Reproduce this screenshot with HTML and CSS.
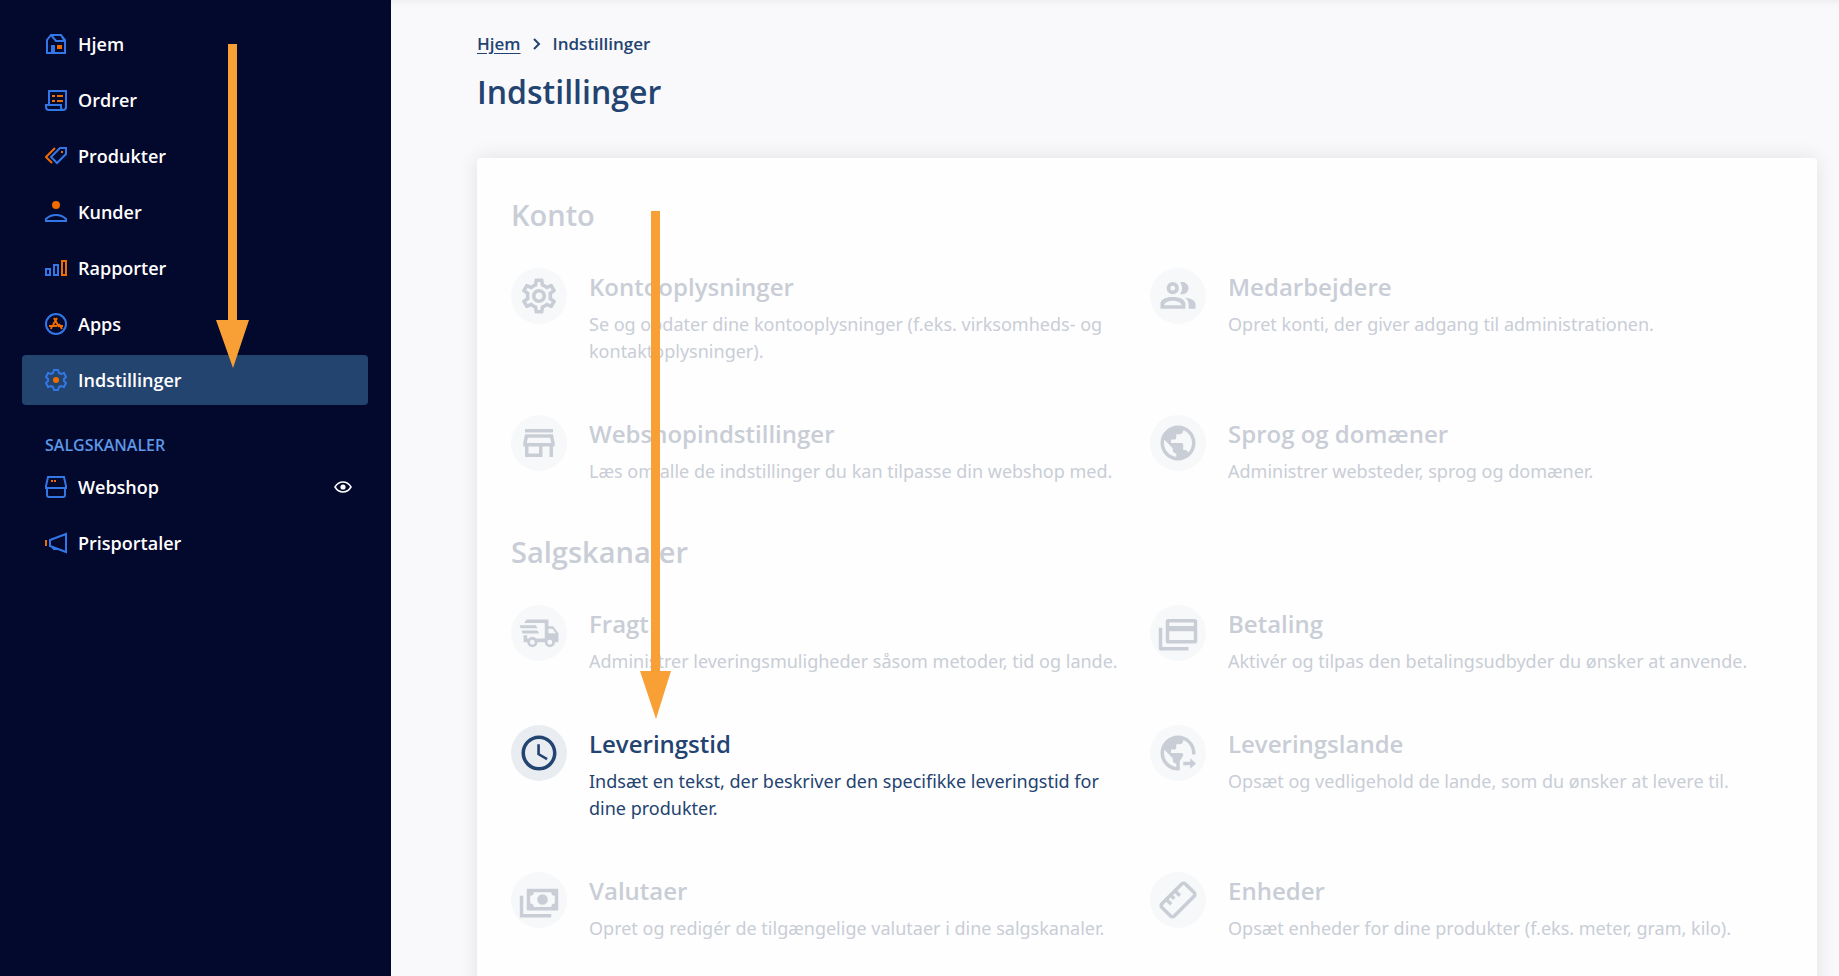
FILE: index.html
```
<!DOCTYPE html>
<html lang="da">

<head>
    <meta charset="UTF-8">
    <meta name="viewport" content="width=device-width, initial-scale=1.0">
    <title>Indstillinger</title>
    <link rel="stylesheet" href="styles.css">
</head>

<body>
    <!-- Sidebar -->
    <aside class="sidebar">
        <nav class="nav">
            <a href="#" class="nav-link">
                <svg class="nav-icon" viewBox="0 0 22 22"><path class="blue" d="M2 20V7L6 2H16L20 7V20ZM6 2L11 8H20M16 2L19 7"/><path class="blue-fill" d="M6 12h4v8H6z"/><path class="orange-fill" d="M12 12h5v4h-5z"/></svg>
                Hjem
            </a>
            <a href="#" class="nav-link">
                <svg class="nav-icon" viewBox="0 0 22 22"><path class="blue" d="M4 15V2H21V18Q21 21 18 21H4Q1 21 1 18V16H16V18Q16 21 18 21"/><path class="orange" d="M7 7h3M12 7h6M7 12h3M12 12h6"/></svg>
                Ordrer
            </a>
            <a href="#" class="nav-link">
                <svg class="nav-icon" viewBox="0 0 22 22"><path class="orange" d="M10 3L1 12L7 18"/><path class="blue" d="M15 3H21V9L12 18L6 12Z"/><path class="orange-fill" d="M16 6h2v2h-2z"/></svg>
                Produkter
            </a>
            <a href="#" class="nav-link">
                <svg class="nav-icon" viewBox="0 0 22 22"><circle class="orange-fill" cx="11" cy="4" r="4"/><path class="blue" d="M1 20V18Q5 14 11 14T21 18V20Z"/></svg>
                Kunder
            </a>
            <a href="#" class="nav-link">
                <svg class="nav-icon" viewBox="0 0 22 22"><path class="blue" d="M1 12h4v6H1zM9 8h4v10H9z"/><path class="orange" d="M17 4h4v14h-4z"/></svg>
                Rapporter
            </a>
            <a href="#" class="nav-link">
                <svg class="nav-icon" viewBox="0 0 22 22"><circle class="blue" cx="11" cy="11" r="10"/><path class="orange" d="M9 5L14 14M12 5L8 12M4 13H12M7 13L6 16M14 11L17 16M13 13H18"/></svg>
                Apps
            </a>
            <a href="#" class="nav-link active">
                <svg class="nav-icon" viewBox="0 0 22 22"><path class="blue" d="M9 1H13L14 4L16 5L19 4L21 8L19 10V12L21 14L19 18L16 17L14 18L13 21H9L8 18L6 17L3 18L1 14L3 12V10L1 8L3 4L6 5L8 4Z"/><circle class="orange-fill" cx="11" cy="11" r="3"/></svg>
                Indstillinger
            </a>
        </nav>

        <h2 class="nav-heading">Salgskanaler</h2>
        <nav class="nav">
            <a href="#" class="nav-link">
                <svg class="nav-icon" viewBox="0 0 22 22"><path class="blue" d="M3 1H19L21 10V12H1V10ZM2 12V19Q2 21 4 21H18Q20 21 20 19V12"/><path class="orange" d="M6 5h2M9 5h2"/></svg>
                Webshop
                <svg class="eye" viewBox="0 0 18 12"><path d="M1 6Q4 1 9 1T17 6Q14 11 9 11T1 6Z" fill="none" stroke="currentColor" stroke-width="1.5"/><circle cx="9" cy="6" r="2.6" fill="currentColor"/></svg>
            </a>
            <a href="#" class="nav-link">
                <svg class="nav-icon" viewBox="0 0 22 22"><path class="orange" d="M1 8v6"/><path class="blue" d="M5 8L21 2V20L5 14ZM7 15L9 17L12 17"/></svg>
                Prisportaler
            </a>
        </nav>
    </aside>

    <!-- Page content -->
    <main class="content">
        <nav class="breadcrumb">
            <a href="#">Hjem</a>
            <svg class="chevron" viewBox="0 0 8 12"><path d="M1 1L6 6L1 11" fill="none" stroke="currentColor" stroke-width="2"/></svg>
            <span>Indstillinger</span>
        </nav>
        <h1>Indstillinger</h1>

        <div class="card">
            <h2 class="group-title">Konto</h2>
            <div class="settings">
                <a href="#" class="setting">
                    <span class="circle"><svg viewBox="0 0 24 24"><path d="M19.43 12.98c.04-.32.07-.64.07-.98s-.03-.66-.07-.98l2.11-1.65c.19-.15.24-.42.12-.64l-2-3.46c-.09-.16-.26-.25-.44-.25-.06 0-.12.01-.17.03l-2.49 1c-.52-.4-1.08-.73-1.69-.98l-.38-2.65C14.46 2.18 14.25 2 14 2h-4c-.25 0-.46.18-.49.42l-.38 2.65c-.61.25-1.17.59-1.69.98l-2.49-1c-.06-.02-.12-.03-.18-.03-.17 0-.34.09-.43.25l-2 3.46c-.13.22-.07.49.12.64l2.11 1.65c-.04.32-.07.65-.07.98s.03.66.07.98l-2.11 1.65c-.19.15-.24.42-.12.64l2 3.46c.09.16.26.25.44.25.06 0 .12-.01.17-.03l2.49-1c.52.4 1.08.73 1.69.98l.38 2.65c.03.24.24.42.49.42h4c.25 0 .46-.18.49-.42l.38-2.65c.61-.25 1.17-.59 1.69-.98l2.49 1c.06.02.12.03.18.03.17 0 .34-.09.43-.25l2-3.46c.12-.22.07-.49-.12-.64l-2.11-1.65zm-1.98-1.71c.04.31.05.52.05.73s-.02.43-.05.73l-.14 1.13.89.7 1.08.84-.7 1.21-1.27-.51-1.04-.42-.9.68c-.43.32-.84.56-1.25.73l-1.06.43-.16 1.13-.2 1.35h-1.4l-.19-1.35-.16-1.13-1.06-.43c-.43-.18-.83-.41-1.23-.71l-.91-.7-1.06.43-1.27.51-.7-1.21 1.08-.84.89-.7-.14-1.13c-.03-.31-.05-.54-.05-.74s.02-.43.05-.73l.14-1.13-.89-.7-1.08-.84.7-1.21 1.27.51 1.04.42.9-.68c.43-.32.84-.56 1.25-.73l1.06-.43.16-1.13.2-1.35h1.39l.19 1.35.16 1.13 1.06.43c.43.18.83.41 1.23.71l.91.7 1.06-.43 1.27-.51.7 1.21-1.07.85-.89.7.14 1.13zM12 8c-2.21 0-4 1.79-4 4s1.79 4 4 4 4-1.79 4-4-1.79-4-4-4zm0 6c-1.1 0-2-.9-2-2s.9-2 2-2 2 .9 2 2-.9 2-2 2z"/></svg></span>
                    <span class="text">
                        <strong>Kontooplysninger</strong>
                        <span>Se og opdater dine kontooplysninger (f.eks. virksomheds- og kontaktoplysninger).</span>
                    </span>
                </a>
                <a href="#" class="setting">
                    <span class="circle"><svg viewBox="0 0 24 24"><path fill-rule="evenodd" d="M9 11a3.500 3.500 0 1 0 0-7 3.500 3.500 0 0 0 0 7zm0-2.100a1.400 1.400 0 1 1 0-2.800 1.400 1.400 0 0 1 0 2.800zM9 12.600c-4 0-7 1.500-7 4v2.700h14.200v-2.700c0-2.500-3-4-7.200-4zm-5 4.700c.5-1.700 2.500-2.600 5-2.600s4.700.9 5.200 2.600zM13.200 4.300a5.500 5.500 0 0 1 0 6.500A3.500 3.500 0 1 0 13.200 4.300zM16 13c1.300.9 2.100 2.100 2.100 3.800v2.500H22v-2.700c0-2-2.500-3.300-6-3.600z"/></svg></span>
                    <span class="text">
                        <strong>Medarbejdere</strong>
                        <span>Opret konti, der giver adgang til administrationen.</span>
                    </span>
                </a>
                <a href="#" class="setting">
                    <span class="circle"><svg viewBox="0 0 24 24"><path d="M18.360 9l.6 3H5.040l.6-3h12.720M20 4H4v2h16V4zm0 3H4l-1 5v2h1v6h10v-6h4v6h2v-6h1v-2l-1-5zM6 18v-4h6v4H6z"/></svg></span>
                    <span class="text">
                        <strong>Webshopindstillinger</strong>
                        <span>Læs om alle de indstillinger du kan tilpasse din webshop med.</span>
                    </span>
                </a>
                <a href="#" class="setting">
                    <span class="circle"><svg viewBox="0 0 24 24"><path d="M12 2C6.480 2 2 6.480 2 12s4.480 10 10 10 10-4.480 10-10S17.520 2 12 2zm-1 17.930c-3.950-.49-7-3.850-7-7.930 0-.62.080-1.210.210-1.790L9 15v1c0 1.100.9 2 2 2v1.930zm6.900-2.540c-.26-.81-1-1.390-1.900-1.390h-1v-3c0-.55-.45-1-1-1H8v-2h2c.55 0 1-.45 1-1V7h2c1.100 0 2-.9 2-2v-.41c2.930 1.190 5 4.060 5 7.410 0 2.080-.8 3.970-2.100 5.390z"/></svg></span>
                    <span class="text">
                        <strong>Sprog og domæner</strong>
                        <span>Administrer websteder, sprog og domæner.</span>
                    </span>
                </a>
            </div>

            <h2 class="group-title">Salgskanaler</h2>
            <div class="settings">
                <a href="#" class="setting">
                    <span class="circle"><svg viewBox="0 0 24 24"><path fill-rule="evenodd" d="M5 4.300h12.400v3.800h2.700l3 4v5.200h-2a2.900 2.900 0 0 1-5.800 0h-4.200a2.900 2.900 0 0 1-5.800 0H3.200v-4h2v1.900h.9a2.900 2.900 0 0 1 4.400 0h4.800V6.300H3.500zM17.400 9.500v2.700h4.300l-2.100-2.700zM8.200 15.900a1.400 1.400 0 1 0 0 2.800 1.400 1.400 0 0 0 0-2.800zM18.200 15.900a1.400 1.400 0 1 0 0 2.800 1.400 1.400 0 0 0 0-2.800zM.9 7.500h9.300l.9 1.800H1.500zM2 10.500h9.200l.9 1.800H2.600z"/></svg></span>
                    <span class="text">
                        <strong>Fragt</strong>
                        <span>Administrer leveringsmuligheder såsom metoder, tid og lande.</span>
                    </span>
                </a>
                <a href="#" class="setting">
                    <span class="circle"><svg viewBox="0 0 24 24"><path fill-rule="evenodd" d="M6.500 4h15a1.500 1.500 0 0 1 1.500 1.500v11a1.500 1.500 0 0 1-1.500 1.500h-15a1.500 1.500 0 0 1-1.500-1.500v-11A1.500 1.500 0 0 1 6.500 4zM7 6v2h14V6zm0 5v5h14v-5zM1 9h2v11h15v2H2.500A1.500 1.500 0 0 1 1 20.500z"/></svg></span>
                    <span class="text">
                        <strong>Betaling</strong>
                        <span>Aktivér og tilpas den betalingsudbyder du ønsker at anvende.</span>
                    </span>
                </a>
                <a href="#" class="setting current">
                    <span class="circle"><svg viewBox="0 0 24 24"><path d="M11.990 2C6.470 2 2 6.480 2 12s4.470 10 9.990 10C17.520 22 22 17.520 22 12S17.520 2 11.990 2zM12 20c-4.420 0-8-3.580-8-8s3.580-8 8-8 8 3.580 8 8-3.580 8-8 8zm.5-13H11v6l5.250 3.150.75-1.230-4.500-2.670z"/></svg></span>
                    <span class="text">
                        <strong>Leveringstid</strong>
                        <span>Indsæt en tekst, der beskriver den specifikke leveringstid for dine produkter.</span>
                    </span>
                </a>
                <a href="#" class="setting">
                    <span class="circle"><svg viewBox="0 0 24 24"><path d="M12 2C6.480 2 2 6.480 2 12s4.480 10 10 10 10-4.480 10-10S17.520 2 12 2zm-1 17.930c-3.950-.49-7-3.850-7-7.930 0-.62.080-1.210.210-1.790L9 15v1c0 1.100.9 2 2 2v1.930zm6.900-2.540c-.26-.81-1-1.390-1.900-1.390h-1v-3c0-.55-.45-1-1-1H8v-2h2c.55 0 1-.45 1-1V7h2c1.100 0 2-.9 2-2v-.41c2.930 1.190 5 4.060 5 7.410 0 2.080-.8 3.970-2.100 5.390z"/><path class="cutout" d="M15.500 12.900H23V23H13V16.500z"/><path d="M15 17h4v-2l3.300 3-3.300 3v-2h-4z"/></svg></span>
                    <span class="text">
                        <strong>Leveringslande</strong>
                        <span>Opsæt og vedligehold de lande, som du ønsker at levere til.</span>
                    </span>
                </a>
                <a href="#" class="setting">
                    <span class="circle"><svg viewBox="0 0 24 24"><path fill-rule="evenodd" d="M5 5.500h18v12.500H5zM9 7.500a2 2 0 0 1-2 2v4.500a2 2 0 0 1 2 2h10a2 2 0 0 1 2-2V9.500a2 2 0 0 1-2-2zM14 8.700a3 3 0 1 0 0 6 3 3 0 0 0 0-6zM1 9.500h2v10.500h16v2H1z"/></svg></span>
                    <span class="text">
                        <strong>Valutaer</strong>
                        <span>Opret og redigér de tilgængelige valutaer i dine salgskanaler.</span>
                    </span>
                </a>
                <a href="#" class="setting">
                    <span class="circle"><svg viewBox="0 0 24 24"><g class="line" transform="rotate(-45 12 12)"><rect x="2.500" y="7" width="19" height="10" rx="1.500"/><path d="M7.500 7v4M11 7v3M14.500 7v4"/></g></svg></span>
                    <span class="text">
                        <strong>Enheder</strong>
                        <span>Opsæt enheder for dine produkter (f.eks. meter, gram, kilo).</span>
                    </span>
                </a>
            </div>
        </div>
    </main>

    <!-- Guide arrows -->
    <svg class="arrow arrow-menu" viewBox="0 0 34 324"><path d="M12 0H21V276H33L17 324L0 276H12Z"/></svg>
    <svg class="arrow arrow-page" viewBox="0 0 34 508"><path d="M12 0H21V460H32L17 508L1 460H12Z"/></svg>
</body>

</html>
```
FILE: styles.css
```
* {
    box-sizing: border-box;
}

body {
    position: relative;
    display: flex;
    min-height: 100vh;
    margin: 0;
    background-color: #f9f9fb;
    color: #234370;
    font-family: "Open Sans", "Noto Sans", sans-serif;
}

a {
    color: inherit;
    text-decoration: none;
}

h1,
h2 {
    margin: 0;
    font-weight: 600;
}

/* Sidebar */
.sidebar {
    flex: 0 0 391px;
    padding: 19px 23px 0 22px;
    background-color: #03082d;
    color: white;
}

.nav {
    display: flex;
    flex-direction: column;
    gap: 6px;
}

.nav-link {
    display: flex;
    align-items: center;
    gap: 11px;
    height: 50px;
    padding: 0 16px 0 23px;
    border-radius: 4px;
    font-size: 18px;
    font-weight: 600;
}

.nav-link.active {
    background-color: #244470;
}

.nav-icon {
    width: 22px;
    height: 22px;
}

.nav-icon path,
.nav-icon circle {
    fill: none;
    stroke-width: 2;
}

.nav-icon .blue {
    stroke: #3377e6;
}

.nav-icon .orange {
    stroke: #f06c00;
}

.nav-icon .blue-fill {
    fill: #3377e6;
}

.nav-icon .orange-fill {
    fill: #f06c00;
}

.eye {
    width: 18px;
    height: 12px;
    margin-left: auto;
}

.nav-heading {
    padding: 29px 23px 6px;
    color: #5d97e8;
    font-size: 16px;
    line-height: 22px;
    text-transform: uppercase;
}

/* Content */
.content {
    flex: 1;
    padding: 32px 22px 0 86px;
    box-shadow: inset 0 8px 10px -8px rgba(0, 0, 0, 0.08);
}

.breadcrumb {
    display: flex;
    align-items: center;
    gap: 12px;
    font-size: 17px;
    font-weight: 600;
    line-height: 24px;
}

.breadcrumb a {
    text-decoration: underline;
    text-underline-offset: 3px;
}

.chevron {
    width: 8px;
    height: 12px;
}

h1 {
    margin: 12px 0 42px;
    font-size: 32px;
    line-height: 48px;
}

.card {
    min-height: 860px;
    padding: 40px 28px 0 34px;
    border-radius: 4px;
    background-color: #fefefe;
    box-shadow: 0 0 20px rgba(0, 0, 0, 0.1);
}

.group-title {
    margin-bottom: 36px;
    color: #c9cdd6;
    font-size: 29px;
    line-height: 34px;
}

.settings {
    display: grid;
    grid-template-columns: 1fr 1fr;
}

.setting {
    display: flex;
    gap: 22px;
    padding: 0 16px 50px 0;
    color: #c9cdd6;
}

.setting.current {
    color: #234370;
}

.circle {
    display: flex;
    flex: none;
    align-items: center;
    justify-content: center;
    width: 56px;
    height: 56px;
    border-radius: 50%;
    background-color: #f7f8fa;
}

.current .circle {
    background-color: #e9edf2;
}

.circle svg {
    width: 42px;
    height: 42px;
    fill: currentColor;
}

.circle .line {
    fill: none;
    stroke: currentColor;
    stroke-width: 2;
}

.circle .cutout {
    fill: #f7f8fa;
}

.text {
    display: flex;
    flex-direction: column;
    gap: 5px;
    font-family: "Noto Sans", "Open Sans", sans-serif;
    font-size: 18px;
    line-height: 27px;
}

.text strong {
    font-family: "Open Sans", "Noto Sans", sans-serif;
    font-size: 24px;
    font-weight: 600;
    line-height: 38px;
}

/* Guide arrows */
.arrow {
    position: absolute;
    width: 34px;
    fill: #f8a035;
}

.arrow-menu {
    top: 44px;
    left: 216px;
    height: 324px;
}

.arrow-page {
    top: 211px;
    left: 639px;
    height: 508px;
}
```
